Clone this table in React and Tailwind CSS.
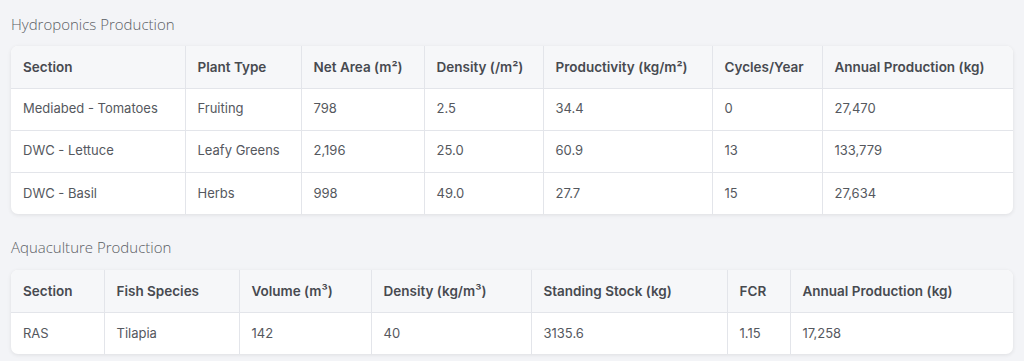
import React from "react";

const hydro = {
  cols: [174, 116, 123, 119, 169, 110, 191],
  head: ["Section", "Plant Type", "Net Area (m²)", "Density (/m²)", "Productivity (kg/m²)", "Cycles/Year", "Annual Production (kg)"],
  rows: [
    ["Mediabed - Tomatoes", "Fruiting", "798", "2.5", "34.4", "0", "27,470"],
    ["DWC - Lettuce", "Leafy Greens", "2,196", "25.0", "60.9", "13", "133,779"],
    ["DWC - Basil", "Herbs", "998", "49.0", "27.7", "15", "27,634"],
  ],
};

const aqua = {
  cols: [93, 135, 132, 160, 196, 63, 223],
  head: ["Section", "Fish Species", "Volume (m³)", "Density (kg/m³)", "Standing Stock (kg)", "FCR", "Annual Production (kg)"],
  rows: [["RAS", "Tilapia", "142", "40", "3135.6", "1.15", "17,258"]],
};

function DataTable({ data }) {
  return (
    <div className="rounded-[7px] bg-white shadow-[0_1px_4px_rgba(0,0,0,0.09)] overflow-hidden">
      <table className="w-full table-fixed border-collapse text-[13px] font-['Inter',sans-serif]">
        <colgroup>
          {data.cols.map((w, i) => (
            <col key={i} style={{ width: w }} />
          ))}
        </colgroup>
        <thead>
          <tr className="h-[42px] bg-[#f6f7f9]">
            {data.head.map((h, i) => (
              <th
                key={i}
                className={`px-3 text-left text-[13.5px] font-semibold text-[#474a50] border-b border-[#e3e5ea] ${i > 0 ? "border-l" : ""}`}
              >
                {h}
              </th>
            ))}
          </tr>
        </thead>
        <tbody>
          {data.rows.map((r, ri) => (
            <tr key={ri} className="h-[42px]">
              {r.map((c, i) => (
                <td
                  key={i}
                  className={`px-3 text-[#55585e] border-[#e3e5ea] ${i > 0 ? "border-l" : ""} ${ri < data.rows.length - 1 ? "border-b" : ""}`}
                >
                  {c}
                </td>
              ))}
            </tr>
          ))}
        </tbody>
      </table>
    </div>
  );
}

export default function App() {
  return (
    <div className="w-[1024px] h-[361px] bg-[#f3f4f7] px-[11px] pt-[13px] overflow-hidden">
      <h2 className="text-[15px] leading-[22px] font-light text-[#5b5e64] font-['Open_Sans',sans-serif]">
        Hydroponics Production
      </h2>
      <div className="mt-[11px]">
        <DataTable data={hydro} />
      </div>
      <h2 className="mt-[22px] text-[15px] leading-[22px] font-light text-[#5b5e64] font-['Open_Sans',sans-serif]">
        Aquaculture Production
      </h2>
      <div className="mt-[12px]">
        <DataTable data={aqua} />
      </div>
    </div>
  );
}
